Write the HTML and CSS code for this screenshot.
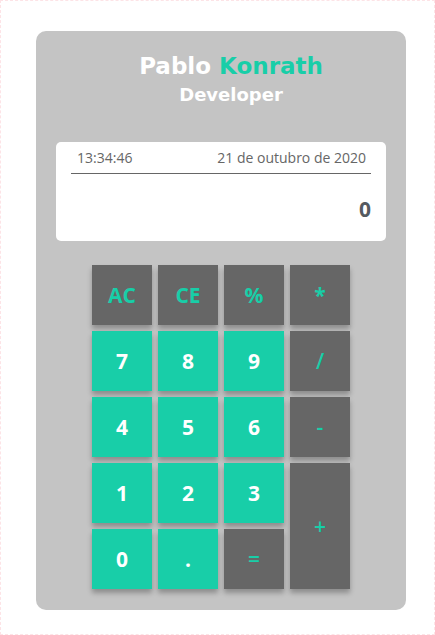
FILE: index.html
```html
<!DOCTYPE html>
<html lang="pt-BR">
<head>
<meta charset="utf-8">
<title>Calculadora</title>
<link rel="stylesheet" href="styles.css">
</head>
<body>
<div class="page">
  <main class="card">
    <header class="header">
      <h1 class="name">Pablo <span class="accent">Konrath</span></h1>
      <p class="role">Developer</p>
    </header>
    <section class="display">
      <div class="meta">
        <span class="time">13:34:46</span>
        <span class="date">21 de outubro de 2020</span>
      </div>
      <div class="value">0</div>
    </section>
    <section class="keys">
      <button class="key op">AC</button>
      <button class="key op">CE</button>
      <button class="key op">%</button>
      <button class="key op">*</button>
      <button class="key num">7</button>
      <button class="key num">8</button>
      <button class="key num">9</button>
      <button class="key op light">/</button>
      <button class="key num">4</button>
      <button class="key num">5</button>
      <button class="key num">6</button>
      <button class="key op light">-</button>
      <button class="key num">1</button>
      <button class="key num">2</button>
      <button class="key num">3</button>
      <button class="key op light plus">+</button>
      <button class="key num">0</button>
      <button class="key num">.</button>
      <button class="key op light">=</button>
    </section>
  </main>
</div>
</body>
</html>
```

FILE: styles.css
```css
* { box-sizing: border-box; }
html, body { margin: 0; padding: 0; background: #fff; }
.page {
  width: 435px;
  height: 635px;
  border: 1px dashed #fde3e6;
  padding: 30px 28px 0 35px;
}
.card {
  width: 370px;
  height: 579px;
  background: #c4c4c4;
  border-radius: 10px;
  padding: 20px 20px 0 20px;
}
.header { text-align: center; padding-left: 20px; }
.name {
  margin: 0;
  font-family: "DejaVu Sans", sans-serif;
  font-weight: 700;
  font-size: 23px;
  line-height: 30px;
  color: #fff;
}
.accent { color: #18cea8; }
.role {
  margin: 2px 0 0 0;
  font-family: "DejaVu Sans", sans-serif;
  font-weight: 700;
  font-size: 18px;
  line-height: 24px;
  color: #fff;
}
.display {
  margin-top: 35px;
  height: 99px;
  background: #fff;
  border-radius: 5px;
  padding: 6px 15px 0 15px;
  font-family: "Open Sans", sans-serif;
}
.meta {
  display: flex;
  justify-content: space-between;
  border-bottom: 1px solid #666;
  padding: 0 5px 5px 6px;
  font-size: 14px;
  line-height: 20px;
  color: #666;
}
.value {
  text-align: right;
  font-weight: 700;
  font-size: 21px;
  line-height: 28px;
  color: #555a60;
  margin-top: 21px;
}
.keys {
  margin: 24px auto 0 auto;
  width: 258px;
  display: grid;
  grid-template-columns: repeat(4, 60px);
  grid-auto-rows: 60px;
  gap: 6px;
}
.key {
  border: 0;
  padding: 0;
  margin: 0;
  font-family: "Open Sans", sans-serif;
  font-weight: 700;
  font-size: 21px;
  box-shadow: 0 4px 5px rgba(0, 0, 0, 0.28);
  display: flex;
  align-items: center;
  justify-content: center;
}
.num { background: #18cea8; color: #fff; }
.op { background: #666; color: #18cea8; }
.light { font-weight: 600; }
.plus { grid-column: 4; grid-row: 4 / span 2; }
```
